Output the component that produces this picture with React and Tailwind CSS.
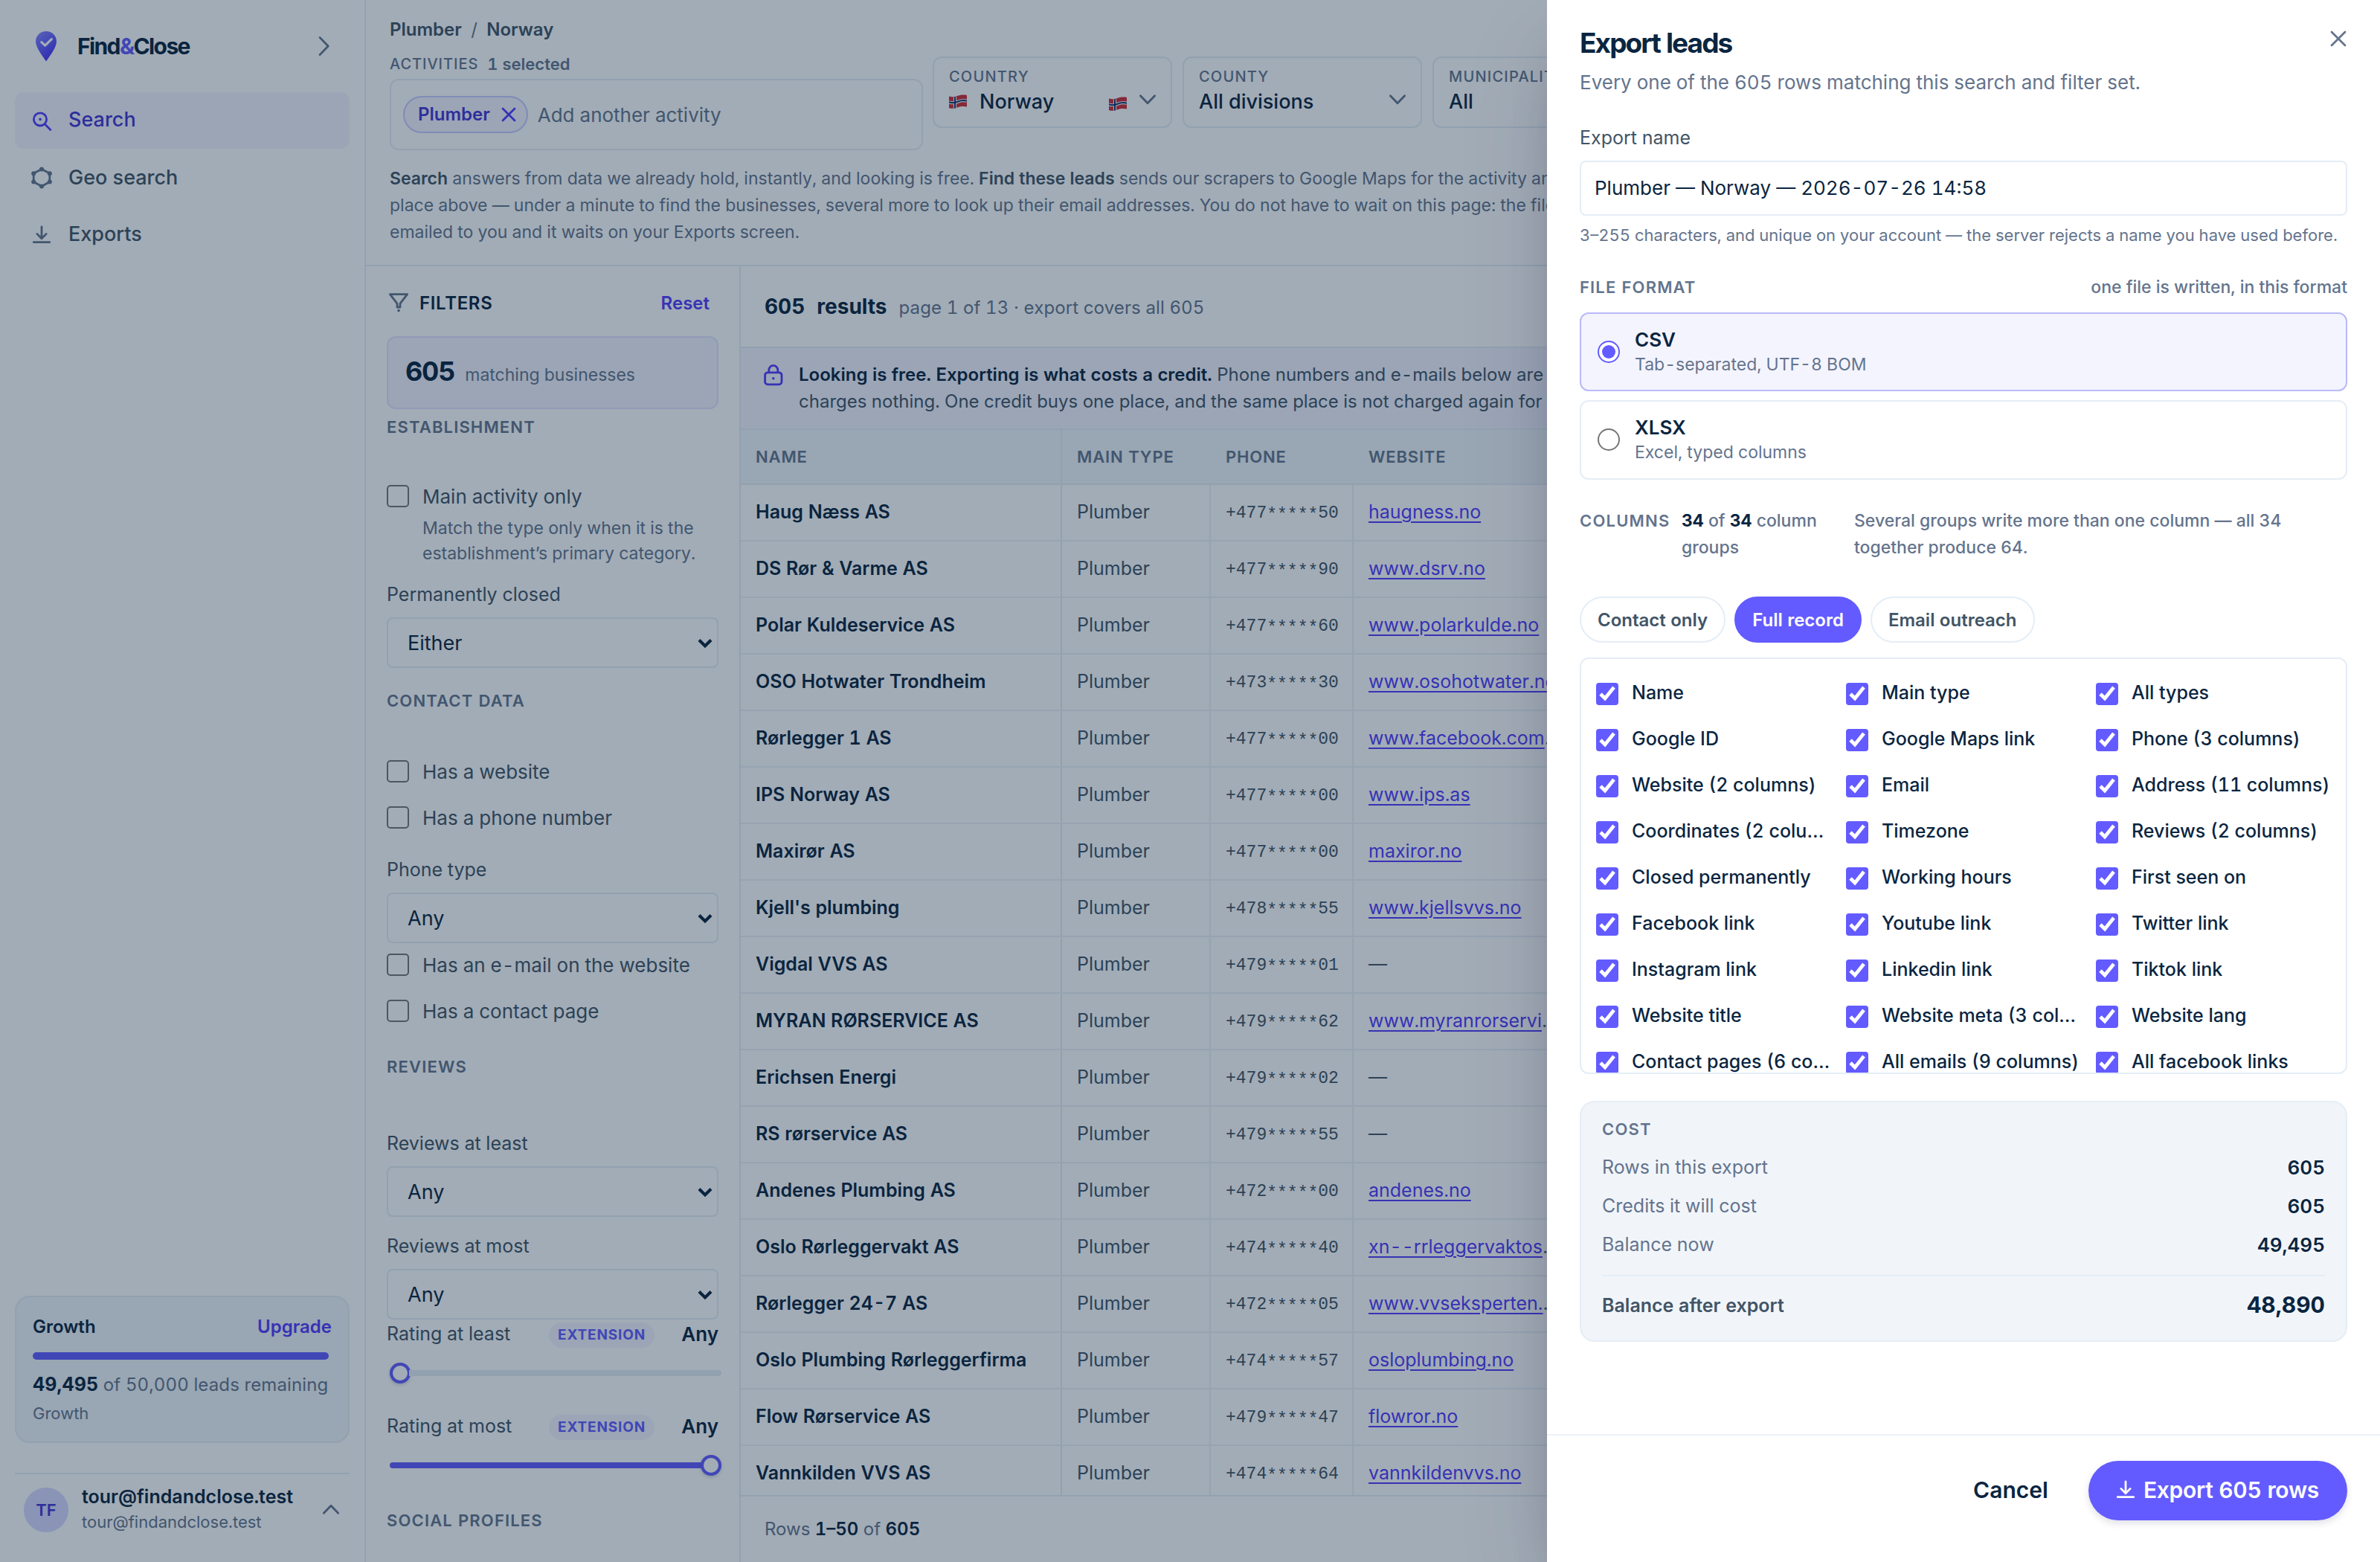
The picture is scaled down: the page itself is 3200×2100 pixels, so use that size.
import React from "react";

const ROWS = [
  ["Haug Næss AS", "+477", "50", "haugness.no"],
  ["DS Rør & Varme AS", "+477", "90", "www.dsrv.no"],
  ["Polar Kuldeservice AS", "+477", "60", "www.polarkulde.no"],
  ["OSO Hotwater Trondheim", "+473", "30", "www.osohotwater.no"],
  ["Rørlegger 1 AS", "+477", "00", "www.facebook.com/rorlegger"],
  ["IPS Norway AS", "+477", "00", "www.ips.as"],
  ["Maxirør AS", "+477", "00", "maxiror.no"],
  ["Kjell's plumbing", "+478", "55", "www.kjellsvvs.no"],
  ["Vigdal VVS AS", "+479", "01", null],
  ["MYRAN RØRSERVICE AS", "+479", "62", "www.myranrorservice.no"],
  ["Erichsen Energi", "+479", "02", null],
  ["RS rørservice AS", "+479", "55", null],
  ["Andenes Plumbing AS", "+472", "00", "andenes.no"],
  ["Oslo Rørleggervakt AS", "+474", "40", "xn--rrleggervaktoslo.no"],
  ["Rørlegger 24-7 AS", "+472", "05", "www.vvseksperten.no"],
  ["Oslo Plumbing Rørleggerfirma", "+474", "57", "osloplumbing.no"],
  ["Flow Rørservice AS", "+479", "47", "flowror.no"],
  ["Vannkilden VVS AS", "+474", "64", "vannkildenvvs.no"],
];

const COLUMNS = [
  "Name", "Main type", "All types",
  "Google ID", "Google Maps link", "Phone (3 columns)",
  "Website (2 columns)", "Email", "Address (11 columns)",
  "Coordinates (2 columns)", "Timezone", "Reviews (2 columns)",
  "Closed permanently", "Working hours", "First seen on",
  "Facebook link", "Youtube link", "Twitter link",
  "Instagram link", "Linkedin link", "Tiktok link",
  "Website title", "Website meta (3 columns)", "Website lang",
  "Contact pages (6 columns)", "All emails (9 columns)", "All facebook links",
];

function Icon({ children, className = "", size = 16 }) {
  return (
    <svg
      width={size}
      height={size}
      viewBox="0 0 16 16"
      fill="none"
      stroke="currentColor"
      strokeWidth="1.4"
      strokeLinecap="round"
      strokeLinejoin="round"
      className={"shrink-0 " + className}
    >
      {children}
    </svg>
  );
}

const Download = ({ className }) => (
  <Icon className={className}>
    <path d="M8 2.900v7.900M4.900 7.700 8 10.900l3.100-3.200M2.600 13.300h10.800" />
  </Icon>
);

const Chevron = ({ className }) => (
  <svg width="12" height="8" viewBox="0 0 12 8" fill="none" stroke="currentColor" strokeWidth="1.400" strokeLinecap="round" strokeLinejoin="round" className={"shrink-0 " + className}>
    <path d="M1.200 1.400 6 6.400l4.800-5" />
  </svg>
);

const Flag = ({ className = "" }) => (
  <svg width="12" height="9.500" viewBox="0 0 24 19" className={"shrink-0 " + className}>
    <path d="M0 2.500C5 4 9 3 12 1.800S20 .2 24 1v15.500c-4-1-9-.5-12 .8S5 19.500 0 18.300Z" fill="#d02a35" />
    <path d="M0 10.500c5 1.500 9 .5 12-.8s8-2 12-1M8 3.200v15.300" stroke="#f4f4f4" strokeWidth="4.200" fill="none" />
    <path d="M0 10.500c5 1.500 9 .5 12-.8s8-2 12-1M8 3.200v15.300" stroke="#12306e" strokeWidth="2" fill="none" />
  </svg>
);

function Sidebar() {
  return (
    <aside className="flex w-[246px] shrink-0 flex-col border-r border-[#e5edf5] px-[10px]">
      <div className="flex h-[62px] items-center pl-[14px] pr-[13px]">
        <svg width="14" height="20.500" viewBox="0 0 14 20.500">
          <defs>
            <linearGradient id="pin" x1="0" y1="0" x2="0.600" y2="1">
              <stop offset="0" stopColor="#8f8aff" />
              <stop offset="0.550" stopColor="#635bff" />
              <stop offset="1" stopColor="#4a2ff5" />
            </linearGradient>
          </defs>
          <path d="M7 0C3.100 0 0 3 0 6.800 0 10.400 3.200 15 7 20.300 10.800 15 14 10.400 14 6.800 14 3 10.900 0 7 0Z" fill="url(#pin)" />
          <path d="M3.900 7.300 6.300 9.600l4.400-4.300" stroke="#fff" strokeWidth="1.600" strokeLinecap="round" strokeLinejoin="round" fill="none" />
        </svg>
        <span className="ml-[14px] text-[15px] font-bold tracking-[-0.800px] text-[#0a2540]">
          Find<span className="text-[#635bff]">&amp;</span>Close
        </span>
        <svg width="8" height="14" viewBox="0 0 8 14" fill="none" stroke="currentColor" strokeWidth="1.400" strokeLinecap="round" strokeLinejoin="round" className="ml-auto text-[#64748d]">
          <path d="M1 1.200 6.600 7 1 12.800" />
        </svg>
      </div>
      <nav className="flex flex-col text-[13.500px] font-medium text-[#425466]">
        <a className="flex h-[38px] items-center gap-[10px] rounded-[6px] bg-[#f4f4ff] pl-[10px] pb-[0.500px] text-[#4434d4]">
          <Icon className="text-[#533afd]">
            <circle cx="7" cy="7.200" r="4.300" />
            <path d="m10.200 10.500 3.700 3.700" />
            <circle cx="7" cy="7.200" r="0.900" fill="currentColor" stroke="none" />
          </Icon>
          Search
        </a>
        <a className="flex h-[38px] items-center gap-[10px] pl-[10px] pt-[1px]">
          <Icon className="text-[#64748d]">
            <path d="M8 2.200 13.400 5v5.800L8 13.700 2.600 10.800V5Z" />
            <g fill="currentColor" stroke="none">
              <circle cx="8" cy="2.200" r="1.500" /><circle cx="13.400" cy="5.100" r="1.500" /><circle cx="13.400" cy="10.700" r="1.500" />
              <circle cx="8" cy="13.700" r="1.500" /><circle cx="2.600" cy="10.700" r="1.500" /><circle cx="2.600" cy="5.100" r="1.500" />
            </g>
          </Icon>
          Geo search
        </a>
        <a className="flex h-[38px] items-center gap-[10px] pl-[10px] pt-[1px]">
          <Download className="text-[#64748d]" />
          Exports
        </a>
      </nav>
      <div className="mt-auto h-[99px] rounded-[10px] border border-[#e5edf5] bg-[#f1f5fa] px-[11px]">
        <div className="flex h-[37px] items-center justify-between pt-[3px] text-[12px] font-semibold text-[#0a2540]">
          <span>Growth</span>
          <span className="text-[#533afd]">Upgrade</span>
        </div>
        <div className="h-[5px] w-[199px] rounded-full bg-[#635bff]" />
        <div className="mt-[8px] flex h-[18px] items-center whitespace-pre text-[12px] tracking-[0.060px] text-[#64748d]">
          <b className="text-[12.500px] font-bold text-[#0a2540]">49,495</b> of 50,000 leads remaining
        </div>
        <div className="mt-[2px] flex h-[16px] items-center text-[11px] text-[#64748d]">Growth</div>
      </div>
      <div className="mt-[20px] flex h-[60px] items-start border-t border-[#e5edf5] pl-[6px] pt-[9px]">
        <div className="flex size-[30px] items-center justify-center rounded-full bg-[#d9d9ff] text-[11px] font-semibold text-[#4434d4]">TF</div>
        <div className="ml-[9px] mt-[-1px] flex flex-col">
          <span className="flex h-[16px] items-center pb-[1px] text-[12.500px] font-semibold text-[#0a2540]">tour@findandclose.test</span>
          <span className="flex h-[16px] items-center text-[11px] text-[#64748d]">tour@findandclose.test</span>
        </div>
        <Chevron className="ml-auto mr-[6.500px] mt-[10.500px] rotate-180 text-[#64748d]" />
      </div>
    </aside>
  );
}

function FieldBox({ label, children, flag }) {
  return (
    <div className="flex h-[48px] w-[161px] shrink-0 flex-col rounded-[6px] border border-[#e5edf5] pl-[10px] pr-[9.500px] pt-[5.500px]">
      <span className="flex h-[14px] items-center text-[10px] font-medium tracking-[0.600px] text-[#64748d]">{label}</span>
      <span className="flex h-[20px] items-center text-[13.500px] font-medium text-[#0a2540]">
        {flag && <Flag className="relative top-[-0.500px] mr-[8.500px]" />}
        {children}
        {flag && <Flag className="relative top-[1px] ml-auto" />}
        <Chevron className={(flag ? "ml-[8px]" : "ml-auto") + " relative top-[-1.500px] text-[#64748d]"} />
      </span>
    </div>
  );
}

function Header() {
  return (
    <header className="h-[179px] border-b border-[#e5edf5] pl-[16px]">
      <div className="flex h-[38px] items-center gap-[6.200px] pt-[2px] text-[12px] font-semibold text-[#425466]">
        <span>Plumber</span>
        <span className="font-normal text-[#64748d]">/</span>
        <span>Norway</span>
      </div>
      <div className="flex h-[63px] gap-[7px]">
        <div className="w-[358px] shrink-0">
          <div className="flex h-[15px] items-center gap-[6px] pb-[5px] text-[#64748d]">
            <span className="text-[10px] font-medium tracking-[0.480px]">ACTIVITIES</span>
            <span className="text-[11px] font-semibold">1 selected</span>
          </div>
          <div className="flex h-[48px] w-[358.700px] items-center rounded-[6px] border border-[#e5edf5] pl-[8px]">
            <span className="flex h-[25px] items-center gap-[7.500px] rounded-full border border-[#c9caff] bg-[#f4f4ff] pl-[9px] pr-[7px] text-[12px] font-semibold text-[#4434d4]">
              Plumber
              <svg width="10" height="10" viewBox="0 0 10 10" fill="none" stroke="#533afd" strokeWidth="1.400" strokeLinecap="round"><path d="m1 1 8 8M9 1 1 9" /></svg>
            </span>
            <span className="ml-[6.500px] text-[13px] text-[#64748d]">Add another activity</span>
          </div>
        </div>
        <FieldBox label="COUNTRY" flag>Norway</FieldBox>
        <FieldBox label="COUNTY">All divisions</FieldBox>
        <FieldBox label="MUNICIPALITY">All</FieldBox>
      </div>
      <p className="mt-[10px] whitespace-nowrap text-[11.500px] leading-[18px] text-[#64748d]">
        <b className="font-semibold text-[#425466]">Search</b> answers from data we already hold, instantly, and looking is free. <b className="font-semibold text-[#425466]">Find these leads</b> sends our scrapers to Google Maps for the activity and
        <br />
        place above — under a minute to find the businesses, several more to look up their email addresses. You do not have to wait on this page: the file is
        <br />
        emailed to you and it waits on your Exports screen.
      </p>
    </header>
  );
}

const SectionTitle = ({ children, className }) => (
  <div className={"flex h-[22px] items-center text-[11px] font-semibold tracking-[0.580px] text-[#64748d] " + className}>{children}</div>
);

const Check = ({ children, className }) => (
  <label className={"flex h-[15px] items-center gap-[9px] text-[13px] text-[#425466] " + className}>
    <input type="checkbox" className="size-[15px] shrink-0" />
    <span className="whitespace-nowrap">{children}</span>
  </label>
);

const FieldLabel = ({ children, className }) => (
  <div className={"flex h-[22px] items-center text-[12.500px] text-[#425466] " + className}>{children}</div>
);

const Select = ({ value }) => (
  <div className="mt-[4px] flex h-[34px] items-center justify-between rounded-[4px] border border-[#e5edf5] bg-white pl-[13px] pr-[3px] text-[13.500px] text-[#0a2540]">
    <span className="pt-[1px]">{value}</span>
    <svg width="10" height="7" viewBox="0 0 10 7" fill="none" stroke="currentColor" strokeWidth="2.100" className="relative top-[0.500px] shrink-0">
      <path d="M1 1.200 5 5.200 9 1.200" />
    </svg>
  </div>
);

function Rating({ label, className, full }) {
  return (
    <div className={className}>
      <div className="flex h-[20px] items-center text-[12.500px] text-[#425466]">
        <span className="w-[109px]">{label}</span>
        <span className="relative top-[0.500px] flex h-[17px] items-center rounded-full bg-[#f4f4ff] px-[6px] text-[9.500px] font-bold tracking-[0.420px] text-[#635bff]">EXTENSION</span>
        <span className="relative top-[-0.500px] ml-auto text-[13px] font-semibold text-[#0a2540]">Any</span>
      </div>
      <div className="ml-[2px] mt-[9px] flex h-[14px] w-[223px] items-center">
        {full && <div className="-mr-[1px] h-[4px] flex-1 rounded-l-full bg-[#635bff]" />}
        <div className="size-[14px] shrink-0 rounded-full border-2 border-[#635bff] bg-white shadow-[0_1px_2px_rgba(10,37,64,0.200)]" />
        {!full && <div className="-ml-[1px] h-[4px] flex-1 rounded-r-full bg-[#e5edf5]" />}
      </div>
    </div>
  );
}

function Filters() {
  return (
    <section className="w-[252px] shrink-0 overflow-hidden border-r border-[#e5edf5] px-[14px]">
      <div className="flex h-[47px] items-center pt-[3px]">
        <Icon className="relative top-[-0.500px] text-[#64748d]">
          <path d="M2.200 2.300h11.600L9 8.600V11H7V8.600Z" />
          <circle cx="8" cy="13.300" r="0.900" fill="currentColor" stroke="none" />
        </Icon>
        <span className="ml-[6px] text-[12px] font-semibold tracking-[0.340px] text-[#0a2540]">FILTERS</span>
        <span className="ml-auto mr-[6px] text-[12px] font-semibold text-[#533afd]">Reset</span>
      </div>
      <div className="flex h-[49px] items-center rounded-[6px] border border-[#e2e4ff] bg-[#f4f4ff] pl-[11.500px]">
        <div className="flex items-baseline gap-[7px] pb-[2px]">
          <span className="text-[18px] font-bold tracking-[-0.600px] text-[#0a2540]">605</span>
          <span className="text-[11.500px] text-[#64748d]">matching businesses</span>
        </div>
      </div>
      <SectionTitle className="mt-[1px]">ESTABLISHMENT</SectionTitle>
      <Check className="mt-[28px]">Main activity only</Check>
      <p className="ml-[24px] mt-[5.500px] whitespace-nowrap text-[11.500px] leading-[17px] text-[#64748d]">
        Match the type only when it is the
        <br />
        establishment’s primary category.
      </p>
      <FieldLabel className="mt-[8.500px]">Permanently closed</FieldLabel>
      <Select value="Either" />
      <SectionTitle className="mt-[11px]">CONTACT DATA</SectionTitle>
      <Check className="mt-[29px]">Has a website</Check>
      <Check className="mt-[16px]">Has a phone number</Check>
      <FieldLabel className="mt-[17px]">Phone type</FieldLabel>
      <Select value="Any" />
      <Check className="mt-[7px]">Has an e-mail on the website</Check>
      <Check className="mt-[16px]">Has a contact page</Check>
      <SectionTitle className="mt-[19px]">REVIEWS</SectionTitle>
      <FieldLabel className="mt-[30px]">Reviews at least</FieldLabel>
      <Select value="Any" />
      <FieldLabel className="mt-[9px]">Reviews at most</FieldLabel>
      <Select value="Any" />
      <Rating label="Rating at least" />
      <Rating label="Rating at most" className="mt-[19px]" full />
      <SectionTitle className="mt-[19px]">SOCIAL PROFILES</SectionTitle>
    </section>
  );
}

function Results() {
  const th = "flex items-center pl-[10px]";
  return (
    <section className="flex min-w-0 flex-1 flex-col">
      <div className="flex h-[55px] shrink-0 items-center border-b border-[#e5edf5] pl-[16px]">
        <span className="text-[14px] font-bold text-[#0a2540]">605</span>
        <span className="ml-[8px] text-[14px] font-bold text-[#0a2540]">results</span>
        <span className="ml-[8px] pt-[1.500px] text-[12px] tracking-[0.060px] text-[#64748d]">page 1 of 13 · export covers all 605</span>
      </div>
      <div className="flex h-[55px] shrink-0 border-b border-[#e5edf5] bg-[#f4f4ff] pl-[14px] pt-[9px]">
        <Icon className="mt-[1px] text-[#533afd]">
          <rect x="2.300" y="6.400" width="11.200" height="8" rx="1.800" />
          <path d="M4.900 6.400V4.700a3 3 0 0 1 6 0v1.700" />
          <circle cx="7.900" cy="10.400" r="0.900" fill="currentColor" stroke="none" />
        </Icon>
        <p className="ml-[9px] whitespace-nowrap text-[12px] leading-[18px] text-[#425466]">
          <b className="font-semibold text-[#0a2540]">Looking is free. Exporting is what costs a credit.</b> Phone numbers and e-mails below are masked
          <br />
          charges nothing. One credit buys one place, and the same place is not charged again for thirty
        </p>
      </div>
      <div className="grid h-[37px] shrink-0 grid-cols-[216px_100px_96px_1fr] border-b border-[#e5edf5] bg-[#f1f5fa] text-[11px] font-semibold tracking-[0.420px] text-[#64748d]">
        <span className={th + " border-r border-[#e5edf5]"}>NAME</span>
        <span className={th}>MAIN TYPE</span>
        <span className={th}>PHONE</span>
        <span className={th}>WEBSITE</span>
      </div>
      <div className="min-h-0 flex-1 overflow-hidden">
        {ROWS.map(([name, start, end, site]) => (
          <div key={name} className="grid h-[38px] grid-cols-[216px_100px_96px_1fr] border-b border-[#ecf1f7] text-[12.500px] text-[#425466]">
            <span className={th + " border-r border-[#e5edf5] font-semibold text-[#0a2540]"}>{name}</span>
            <span className={th + " border-r border-[#ecf1f7]"}>Plumber</span>
            <span className={th + " border-r border-[#ecf1f7] pt-[1px] font-['Liberation_Mono',monospace] text-[11.500px]"}>
              {start}<span className="relative top-[1.800px]">*****</span>{end}
            </span>
            <span className={th}>
              {site ? (
                <span className="w-[130px] truncate">
                  <a className="text-[#533afd] underline underline-offset-2">{site}</a>
                </span>
              ) : "—"}
            </span>
          </div>
        ))}
      </div>
      <div className="flex h-[45px] shrink-0 items-center whitespace-pre border-t border-[#e5edf5] pl-[16px] text-[12px] text-[#64748d]">
        Rows <b className="font-semibold text-[#0a2540]">1–50</b> of <b className="font-semibold text-[#0a2540]">605</b>
      </div>
    </section>
  );
}

function Format({ title, note, active }) {
  return (
    <label className={"flex items-center rounded-[6px] border pl-[11px] " + (active ? "h-[53px] border-[#b9b9f9] bg-[#f4f4ff]" : "h-[53.500px] border-[#e5edf5] pb-[0.500px]")}>
      <input type="radio" name="format" defaultChecked={active} className="size-[15px] accent-[#635bff]" />
      <span className="ml-[10px] flex flex-col">
        <span className="flex h-[17px] items-center pb-[1px] text-[13px] font-semibold text-[#0a2540]">{title}</span>
        <span className="flex h-[16px] items-center text-[11.500px] text-[#64748d]">{note}</span>
      </span>
    </label>
  );
}

const CostRow = ({ label, value }) => (
  <div className="flex h-[26px] items-center justify-between text-[13px]">
    <span className="text-[12.500px] text-[#64748d]">{label}</span>
    <span className="pb-[1px] font-semibold text-[#0a2540]">{value}</span>
  </div>
);

function ExportPanel() {
  const pill = "flex h-[31px] items-center rounded-full border px-[11px] pt-[0.500px] text-[12px] font-semibold";
  return (
    <div className="absolute inset-y-0 right-0 flex w-[560px] flex-col bg-white shadow-[0_30px_60px_-12px_rgba(50,50,93,0.250),0_18px_36px_-18px_rgba(0,0,0,0.300)]">
      <div className="flex justify-between px-[22px] pt-[16px]">
        <div>
          <h2 className="flex h-[26px] items-center text-[18.500px] font-bold tracking-[-0.950px] text-[#0a2540]">Export leads</h2>
          <p className="mt-[3px] flex h-[21px] items-center pb-[1px] text-[13px] text-[#64748d]">Every one of the 605 rows matching this search and filter set.</p>
        </div>
        <svg width="12" height="12" viewBox="0 0 12 12" fill="none" stroke="#64748d" strokeWidth="1.400" strokeLinecap="round" className="mt-[4px]"><path d="m1.500 1.500 9 9M10.500 1.500l-9 9" /></svg>
      </div>
      <div className="flex flex-1 flex-col px-[22px]">
        <div className="mt-[16.500px] flex h-[20px] items-center pt-[1px] text-[12.500px] text-[#425466]">Export name</div>
        <div className="mt-[5.500px] flex h-[37px] items-center rounded-[4px] border border-[#e5edf5] pb-[0.500px] pl-[9px] text-[13px] text-[#0a2540]">Plumber — Norway — 2026-07-26 14:58</div>
        <div className="mt-[4.500px] flex h-[17px] items-center whitespace-nowrap text-[11px] text-[#64748d]">3–255 characters, and unique on your account — the server rejects a name you have used before.</div>
        <div className="mt-[17.500px] flex h-[18px] items-center justify-between text-[11.500px] text-[#64748d]">
          <span className="text-[11px] font-semibold tracking-[0.580px]">FILE FORMAT</span>
          <span className="font-medium">one file is written, in this format</span>
        </div>
        <div className="mt-[8px] flex flex-col gap-[6px]">
          <Format title="CSV" note="Tab-separated, UTF-8 BOM" active />
          <Format title="XLSX" note="Excel, typed columns" />
        </div>
        <div className="mt-[18.500px] flex text-[11.500px] leading-[18px] text-[#64748d]">
          <span className="w-[68.500px] shrink-0 text-[11px] font-semibold tracking-[0.600px]">COLUMNS</span>
          <span className="w-[116px] shrink-0 font-medium"><b className="font-bold text-[#0a2540]">34</b> of <b className="font-bold text-[#0a2540]">34</b> column<br />groups</span>
          <span className="font-medium">Several groups write more than one column — all 34<br />together produce 64.</span>
        </div>
        <div className="mt-[24px] flex gap-[6px]">
          <span className={pill + " border-[#e5edf5] text-[#425466]"}>Contact only</span>
          <span className={pill + " border-[#635bff] bg-[#635bff] text-white"}>Full record</span>
          <span className={pill + " border-[#e5edf5] text-[#425466]"}>Email outreach</span>
        </div>
        <div className="mt-[10px] h-[280px] overflow-hidden rounded-[6px] border border-[#e5edf5] px-[10px] pt-[8px]">
          <div className="grid grid-cols-3 gap-x-[10px]">
            {COLUMNS.map((c) => (
              <label key={c} className="flex h-[31px] min-w-0 items-center gap-[9px]">
                <input type="checkbox" defaultChecked className="size-[15px] shrink-0 accent-[#635bff]" />
                <span className="truncate pb-[1px] text-[12.500px] font-medium text-[#0a2540]">{c}</span>
              </label>
            ))}
          </div>
        </div>
        <div className="mt-[18px] h-[162px] rounded-[10px] border border-[#e5edf5] bg-[#f1f5fa] px-[14px] pt-[9px]">
          <div className="flex h-[18px] items-center text-[11px] font-semibold tracking-[0.600px] text-[#64748d]">COST</div>
          <div className="mt-[4px]">
            <CostRow label="Rows in this export" value="605" />
            <CostRow label="Credits it will cost" value="605" />
            <CostRow label="Balance now" value="49,495" />
          </div>
          <div className="mt-[7px] flex h-[40px] items-center justify-between border-t border-[#e5edf5]">
            <span className="pt-[0.500px] text-[12.500px] font-semibold text-[#425466]">Balance after export</span>
            <span className="pb-[1px] text-[15px] font-bold text-[#0a2540]">48,890</span>
          </div>
        </div>
      </div>
      <div className="flex h-[86px] items-start justify-end border-t border-[#edf2f8] pr-[22px] pt-[17px]">
        <span className="flex h-[40px] items-center pb-[0.500px] text-[15px] font-semibold text-[#0a2540]">Cancel</span>
        <span className="ml-[27px] flex h-[40px] items-center gap-[4px] rounded-full bg-[#635bff] pb-[0.500px] pl-[17px] pr-[19px] text-[15px] font-semibold tracking-[-0.140px] text-white shadow-[0_2px_5px_rgba(50,50,93,0.150)]">
          <Download className="relative top-[-1px]" />
          Export 605 rows
        </span>
      </div>
    </div>
  );
}

export default function App() {
  return (
    <div className="relative h-[1050px] w-[1600px] overflow-hidden bg-white font-['Inter',sans-serif] tabular-nums antialiased [zoom:2]">
      <div className="flex h-full">
        <Sidebar />
        <main className="flex min-w-0 flex-1 flex-col">
          <Header />
          <div className="flex min-h-0 flex-1">
            <Filters />
            <Results />
          </div>
        </main>
      </div>
      <div className="absolute inset-0 bg-[#0a2540]/38" />
      <ExportPanel />
    </div>
  );
}
